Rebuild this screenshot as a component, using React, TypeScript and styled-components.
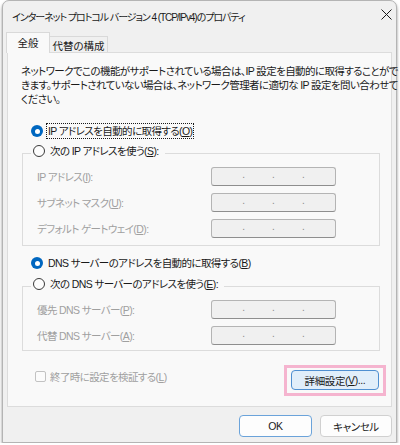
import React from 'react';
import styled, { createGlobalStyle, css } from 'styled-components';

const GlobalStyle = createGlobalStyle`
	html, body {
		margin: 0;
		padding: 0;
		background: #ffffff;
	}
	body {
		font-family: "Liberation Sans", "Noto Sans CJK JP", sans-serif;
		font-size: 10.5px;
		font-feature-settings: "palt";
		color: #1a1a1a;
		overflow: hidden;
	}
`;

const jpText = css`
	font-family: "Liberation Sans", "Noto Sans CJK JP", sans-serif;
	font-feature-settings: "palt";
	font-size: 10.5px;
	letter-spacing: -0.6px;
	white-space: nowrap;
`;

const Window = styled.div`
	box-sizing: border-box;
	margin-left: 2px;
	width: 395px;
	height: 443px;
	background: #f0f0f0;
	border: 1px solid #b4b4b4;
	border-radius: 7px 7px 0 0;
	box-shadow: 0 2px 3px rgba(0, 0, 0, 0.45);
	display: flex;
	flex-direction: column;
	padding: 0 4px;
`;

const TitleBar = styled.div`
	height: 31px;
	display: flex;
	align-items: center;
	justify-content: space-between;
	padding-left: 5px;
`;

const Title = styled.span`
	${jpText};
	font-size: 10px;
	letter-spacing: -1.05px;
	color: #1a1a1a;
`;

const CloseButton = styled.button`
	border: 0;
	background: transparent;
	padding: 0;
	width: 20px;
	height: 20px;
	margin-right: -4px;
	display: flex;
	align-items: center;
	justify-content: center;
	margin-top: -4px;
`;

const TabStrip = styled.div`
	display: flex;
	align-items: flex-end;
	height: 21px;
	margin-bottom: -1px;
`;

const Tab = styled.div<{ $active?: boolean }>`
	${jpText};
	letter-spacing: 0;
	box-sizing: border-box;
	display: flex;
	align-items: center;
	justify-content: center;
	border: 1px solid #d9d9d9;
	border-bottom: 0;
	${(p) =>
		p.$active
			? css`
					position: relative;
					z-index: 1;
					width: 44px;
					height: 21px;
					margin-left: -1px;
					background: #f9f9f9;
					padding-bottom: 1px;
				`
			: css`
					width: 58px;
					height: 17px;
					background: #f0f0f0;
					border-left: 0;
				`}
`;

const Panel = styled.div`
	box-sizing: border-box;
	height: 355px;
	background: #f9f9f9;
	border: 1px solid #dcdcdc;
	display: flex;
	flex-direction: column;
	padding: 0 0 0 13px;
`;

const Description = styled.p`
	${jpText};
	margin: 11px 0 0;
	line-height: 14px;
`;

const RadioRow = styled.label<{ $top: number }>`
	${jpText};
	display: flex;
	align-items: center;
	height: 18px;
	margin-top: ${(p) => p.$top}px;
	margin-left: 10px;
	gap: 3px;
`;

const RadioDot = styled.span<{ $checked?: boolean }>`
	box-sizing: border-box;
	width: 12px;
	height: 12px;
	border-radius: 50%;
	flex: none;
	display: flex;
	align-items: center;
	justify-content: center;
	${(p) =>
		p.$checked
			? css`
					background: #0067c0;
					&::after {
						content: '';
						width: 5px;
						height: 5px;
						border-radius: 50%;
						background: #ffffff;
					}
				`
			: css`
					border: 1px solid #3a3a3a;
					background: #fdfdfd;
				`}
`;

const FocusLabel = styled.span<{ $focused?: boolean }>`
	padding: 0 1px;
	line-height: 14px;
	border: 1px dotted ${(p) => (p.$focused ? '#1a1a1a' : 'transparent')};
`;

const Key = styled.span`
	text-decoration: underline;
	text-underline-offset: 1px;
`;

const GroupBox = styled.fieldset<{ $top: number; $bottom: number }>`
	box-sizing: border-box;
	width: 358px;
	margin: ${(p) => p.$top}px 0 0 1px;
	padding: 4px 0 ${(p) => p.$bottom}px 14px;
	border: 1px solid #dcdcdc;
	border-radius: 0;
	display: flex;
	flex-direction: column;
	gap: 7px;
`;

const Legend = styled.legend`
	${jpText};
	display: flex;
	align-items: center;
	gap: 3px;
	height: 16px;
	padding: 0 4px 4px 2px;
	margin-left: -6px;
`;

const FieldRow = styled.div`
	display: flex;
	align-items: center;
	height: 19px;
`;

const FieldLabel = styled.span`
	${jpText};
	width: 174px;
	color: #a0a0a0;
`;

const IpBox = styled.div`
	box-sizing: border-box;
	width: 125px;
	height: 19px;
	background: #f0f0f0;
	border: 1px solid #b4b4b4;
	border-bottom-color: #8e8e8e;
	border-radius: 3px;
	display: flex;
	justify-content: center;
	gap: 27px;
	font-family: "Liberation Sans", sans-serif;
	font-size: 10px;
	line-height: 14px;
	color: #8a8a8a;
`;

const BottomRow = styled.div`
	display: flex;
	justify-content: space-between;
	align-items: flex-start;
	margin-top: 14px;
	padding-right: 5px;
`;

const CheckRow = styled.label`
	${jpText};
	display: flex;
	align-items: center;
	gap: 4px;
	margin-top: 3px;
	margin-left: 14px;
	height: 16px;
	color: #a0a0a0;
`;

const CheckBox = styled.span`
	box-sizing: border-box;
	width: 11px;
	height: 11px;
	border: 1px solid #c2c2c2;
	border-radius: 2px;
	background: #fbfbfb;
`;

const Highlight = styled.div`
	border: 3px solid #f5b4cf;
	padding: 2px 4px 3px;
`;

const Button = styled.button<{ $variant?: 'accent' | 'default' | 'plain'; $width: number }>`
	${jpText};
	letter-spacing: -0.4px;
	box-sizing: border-box;
	width: ${(p) => p.$width}px;
	color: #1a1a1a;
	border-radius: 4px;
	padding: 0;
	display: flex;
	align-items: center;
	justify-content: center;
	${(p) =>
		p.$variant === 'accent'
			? css`
					height: 20px;
					background: #e1eefa;
					border: 1px solid #4f8fd1;
				`
			: p.$variant === 'default'
				? css`
						height: 22px;
						background: #fdfdfd;
						border: 1px solid #6ba3da;
					`
				: css`
						height: 22px;
						background: #fdfdfd;
						border: 1px solid #d0d0d0;
					`}
`;

const Footer = styled.div`
	display: flex;
	justify-content: flex-end;
	gap: 8px;
	padding-top: 8px;
`;

const CloseIcon = () => (
	<svg width="11" height="11" viewBox="0 0 11 11">
		<path d="M0.5 0.5 L10.5 10.5 M10.5 0.5 L0.5 10.5" stroke="#1a1a1a" strokeWidth="1" />
	</svg>
);

const IpField = () => (
	<IpBox>
		<span>.</span>
		<span>.</span>
		<span>.</span>
	</IpBox>
);

type AddressGroupProps = {
	legend: React.ReactNode;
	fields: React.ReactNode[];
	top: number;
	bottom: number;
};

const AddressGroup: React.FC<AddressGroupProps> = ({ legend, fields, top, bottom }) => (
	<GroupBox $top={top} $bottom={bottom}>
		<Legend>
			<RadioDot />
			<FocusLabel>{legend}</FocusLabel>
		</Legend>
		{fields.map((label, i) => (
			<FieldRow key={i}>
				<FieldLabel>{label}</FieldLabel>
				<IpField />
			</FieldRow>
		))}
	</GroupBox>
);

export default function App() {
	return (
		<>
			<GlobalStyle />
			<Window>
				<TitleBar>
					<Title>インターネット プロトコル バージョン 4 (TCP/IPv4)のプロパティ</Title>
					<CloseButton aria-label="閉じる">
						<CloseIcon />
					</CloseButton>
				</TitleBar>
				<TabStrip>
					<Tab $active>全般</Tab>
					<Tab>代替の構成</Tab>
				</TabStrip>
				<Panel>
					<Description>
						ネットワークでこの機能がサポートされている場合は、IP 設定を自動的に取得することがで
						<br />
						きます。サポートされていない場合は、ネットワーク管理者に適切な IP 設定を問い合わせて
						<br />
						ください。
					</Description>

					<RadioRow $top={16}>
						<RadioDot $checked />
						<FocusLabel $focused>
							IP アドレスを自動的に取得する(<Key>O</Key>)
						</FocusLabel>
					</RadioRow>

					<AddressGroup
						top={3}
						bottom={7}
						legend={
							<>
								次の IP アドレスを使う(<Key>S</Key>):
							</>
						}
						fields={[
							<>
								IP アドレス(<Key>I</Key>):
							</>,
							<>
								サブネット マスク(<Key>U</Key>):
							</>,
							<>
								デフォルト ゲートウェイ(<Key>D</Key>):
							</>,
						]}
					/>

					<RadioRow $top={8}>
						<RadioDot $checked />
						<FocusLabel>
							DNS サーバーのアドレスを自動的に取得する(<Key>B</Key>)
						</FocusLabel>
					</RadioRow>

					<AddressGroup
						top={4}
						bottom={5}
						legend={
							<>
								次の DNS サーバーのアドレスを使う(<Key>E</Key>):
							</>
						}
						fields={[
							<>
								優先 DNS サーバー(<Key>P</Key>):
							</>,
							<>
								代替 DNS サーバー(<Key>A</Key>):
							</>,
						]}
					/>

					<BottomRow>
						<CheckRow>
							<CheckBox />
							<span>
								終了時に設定を検証する(<Key>L</Key>)
							</span>
						</CheckRow>
						<Highlight>
							<Button $variant="accent" $width={88}>
								詳細設定(<Key>V</Key>)...
							</Button>
						</Highlight>
					</BottomRow>
				</Panel>
				<Footer>
					<Button $variant="default" $width={73}>
						OK
					</Button>
					<Button $variant="plain" $width={72}>
						キャンセル
					</Button>
				</Footer>
			</Window>
		</>
	);
}
